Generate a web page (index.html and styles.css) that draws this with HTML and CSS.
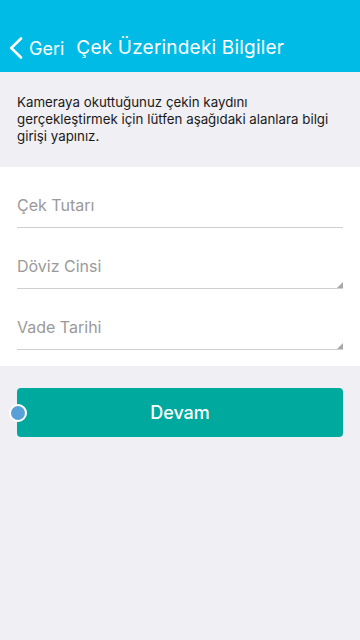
FILE: index.html
```html
<!DOCTYPE html>
<html lang="tr">
<head>
  <meta charset="UTF-8">
  <meta name="viewport" content="width=device-width, initial-scale=1.0">
  <title>Çek Üzerindeki Bilgiler</title>
  <link rel="stylesheet" href="styles.css">
</head>
<body>
  <div class="header">
    <a class="back" href="#">
      <svg class="back-icon" width="14" height="22" viewBox="0 0 14 22">
        <path d="M12 1.5 L2.2 11 L12 20.5" fill="none" stroke="#fff" stroke-width="2.6" stroke-linecap="round" stroke-linejoin="round"/>
      </svg>
      <span>Geri</span>
    </a>
    <h1>Çek Üzerindeki Bilgiler</h1>
  </div>

  <p class="intro">Kameraya okuttuğunuz çekin kaydını gerçekleştirmek için lütfen aşağıdaki alanlara bilgi girişi yapınız.</p>

  <div class="form">
    <div class="field">
      <span class="placeholder">Çek Tutarı</span>
    </div>
    <div class="field select">
      <span class="placeholder">Döviz Cinsi</span>
    </div>
    <div class="field select">
      <span class="placeholder">Vade Tarihi</span>
    </div>
  </div>

  <div class="actions">
    <button class="btn">Devam</button>
    <span class="dot"></span>
  </div>
</body>
</html>
```

FILE: styles.css
```css
* {
  box-sizing: border-box;
  margin: 0;
  padding: 0;
}

body {
  width: 360px;
  min-height: 640px;
  font-family: Inter, 'Noto Sans', sans-serif;
  background: #efeff4;
}

.header {
  height: 72px;
  background: #00bbe6;
  color: white;
  display: flex;
  align-items: flex-end;
  padding: 0 0 13px 9px;
}

.back {
  display: flex;
  align-items: center;
  gap: 6px;
  color: white;
  text-decoration: none;
  font-size: 18px;
}

.header h1 {
  font-size: 19px;
  font-weight: 400;
  margin-left: 12px;
  letter-spacing: 0.2px;
}

.intro {
  font-size: 13.3px;
  line-height: 17px;
  color: #1a1a1a;
  padding: 22px 17px 0 17px;
  height: 95px;
}

.form {
  background: white;
  padding: 0 17px 16px 17px;
}

.field {
  position: relative;
  height: 61px;
  display: flex;
  align-items: flex-end;
  padding-bottom: 12px;
  border-bottom: 1px solid #cfcfcf;
}

.placeholder {
  font-size: 16px;
  color: #9a9a9a;
}

.field.select::after {
  content: '';
  position: absolute;
  right: 0;
  bottom: 0;
  border-left: 6px solid transparent;
  border-bottom: 6px solid #a8a8a8;
}

.actions {
  position: relative;
  padding: 22px 17px;
}

.btn {
  width: 100%;
  height: 49px;
  background: #00a99d;
  color: white;
  border: none;
  border-radius: 4px;
  font-family: inherit;
  font-size: 18px;
  font-weight: 500;
}

.dot {
  position: absolute;
  left: 9px;
  top: 38px;
  width: 18px;
  height: 18px;
  border-radius: 50%;
  background: #5aa0d8;
  border: 2px solid white;
}
```
